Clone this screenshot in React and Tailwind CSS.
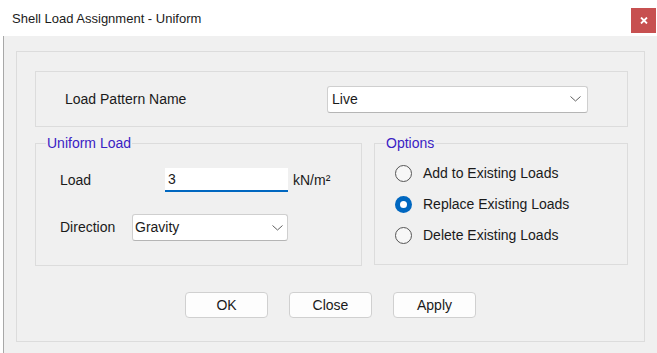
import React from "react";

const font = { fontFamily: '"Liberation Sans", Arial, sans-serif' };

function Chevron() {
  return (
    <svg width="11" height="6" viewBox="0 0 11 6" className="shrink-0">
      <path d="M0.5 0.5 L5.5 5 L10.5 0.5" fill="none" stroke="#606060" strokeWidth="1" />
    </svg>
  );
}

function Select({ value, className, textPad, chevPad }) {
  return (
    <div
      className={`flex items-center justify-between bg-white border border-[#cfcfcf] border-b-[#b5b5b5] rounded-[3px] ${className}`}
    >
      <span className={`text-[14px] text-[#1a1a1a] ${textPad}`}>{value}</span>
      <span className={chevPad}>
        <Chevron />
      </span>
    </div>
  );
}

function Radio({ checked, label }) {
  return (
    <div className="h-[20px] flex items-center gap-[11px]">
      {checked ? (
        <span className="w-[17px] h-[17px] rounded-full bg-[#0067c0] flex items-center justify-center shrink-0">
          <span className="w-[7px] h-[7px] rounded-full bg-white" />
        </span>
      ) : (
        <span className="w-[17px] h-[17px] rounded-full border border-[#555555] bg-[#f7f7f7] shrink-0" />
      )}
      <span className="text-[14px] text-[#1a1a1a]">{label}</span>
    </div>
  );
}

function GroupBox({ title, className, children }) {
  return (
    <div className={`relative border border-[#dcdcdc] ${className}`}>
      <span className="absolute -top-[9px] left-[10px] px-[1px] bg-[#f0f0f0] text-[14px] leading-[16px] text-[#3a22c4]">
        {title}
      </span>
      {children}
    </div>
  );
}

function Button({ children }) {
  return (
    <button className="w-[83px] h-[26px] bg-[#fdfdfd] border border-[#d0d0d0] rounded-[4px] text-[14px] text-[#1a1a1a] flex items-center justify-center">
      {children}
    </button>
  );
}

export default function App() {
  return (
    <div className="w-[657px] h-[353px] bg-white flex flex-col overflow-hidden" style={font}>
      <div className="h-[36px] flex items-start justify-between shrink-0">
        <span className="mt-[9px] ml-[12px] text-[13px] text-[#1b1b1b]">
          Shell Load Assignment - Uniform
        </span>
        <div className="mt-[8px] mr-[1px] w-[25px] h-[25px] bg-[#c75050] flex items-center justify-center">
          <svg width="8" height="7" viewBox="0 0 8 7">
            <path d="M1 0.5 L7 6.5 M7 0.5 L1 6.5" stroke="white" strokeWidth="1.8" />
          </svg>
        </div>
      </div>

      <div className="flex-1 ml-[3px] border-l border-[#a8a8a8] bg-[#f0f0f0] pt-[15px] pl-[12px]">
        <div className="w-[629px] h-[291px] border border-[#dcdcdc] pt-[19px] pl-[18px]">
          <div className="w-[593px] h-[56px] border border-[#dcdcdc] flex items-center">
            <span className="ml-[29px] w-[262px] text-[14px] text-[#1a1a1a]">Load Pattern Name</span>
            <Select value="Live" className="w-[261px] h-[27px]" textPad="pl-[4px]" chevPad="pr-[6px]" />
          </div>

          <div className="flex gap-[12px] mt-[16px]">
            <GroupBox title="Uniform Load" className="w-[327px] h-[123px] pt-[24px] pl-[24px]">
              <div className="flex items-center h-[24px]">
                <span className="w-[105px] text-[14px] text-[#1a1a1a]">Load</span>
                <div className="w-[123px] h-[24px] bg-white border-b-2 border-[#0067c0] flex items-center pl-[3px] text-[14px] text-[#1a1a1a]">
                  3
                </div>
                <span className="ml-[5px] text-[14px] text-[#1a1a1a]">kN/m²</span>
              </div>
              <div className="flex items-center mt-[22px]">
                <span className="w-[72px] text-[14px] text-[#1a1a1a]">Direction</span>
                <Select value="Gravity" className="w-[156px] h-[27px]" textPad="pl-[2px]" chevPad="pr-[4px]" />
              </div>
            </GroupBox>

            <GroupBox title="Options" className="w-[254px] h-[122px] pt-[19px] pl-[20px]">
              <div className="flex flex-col gap-[11px]">
                <Radio label="Add to Existing Loads" />
                <Radio checked label="Replace Existing Loads" />
                <Radio label="Delete Existing Loads" />
              </div>
            </GroupBox>
          </div>

          <div className="flex justify-center gap-[21px] mt-[26px] pr-[18px]">
            <Button>OK</Button>
            <Button>Close</Button>
            <Button>Apply</Button>
          </div>
        </div>
      </div>
    </div>
  );
}
